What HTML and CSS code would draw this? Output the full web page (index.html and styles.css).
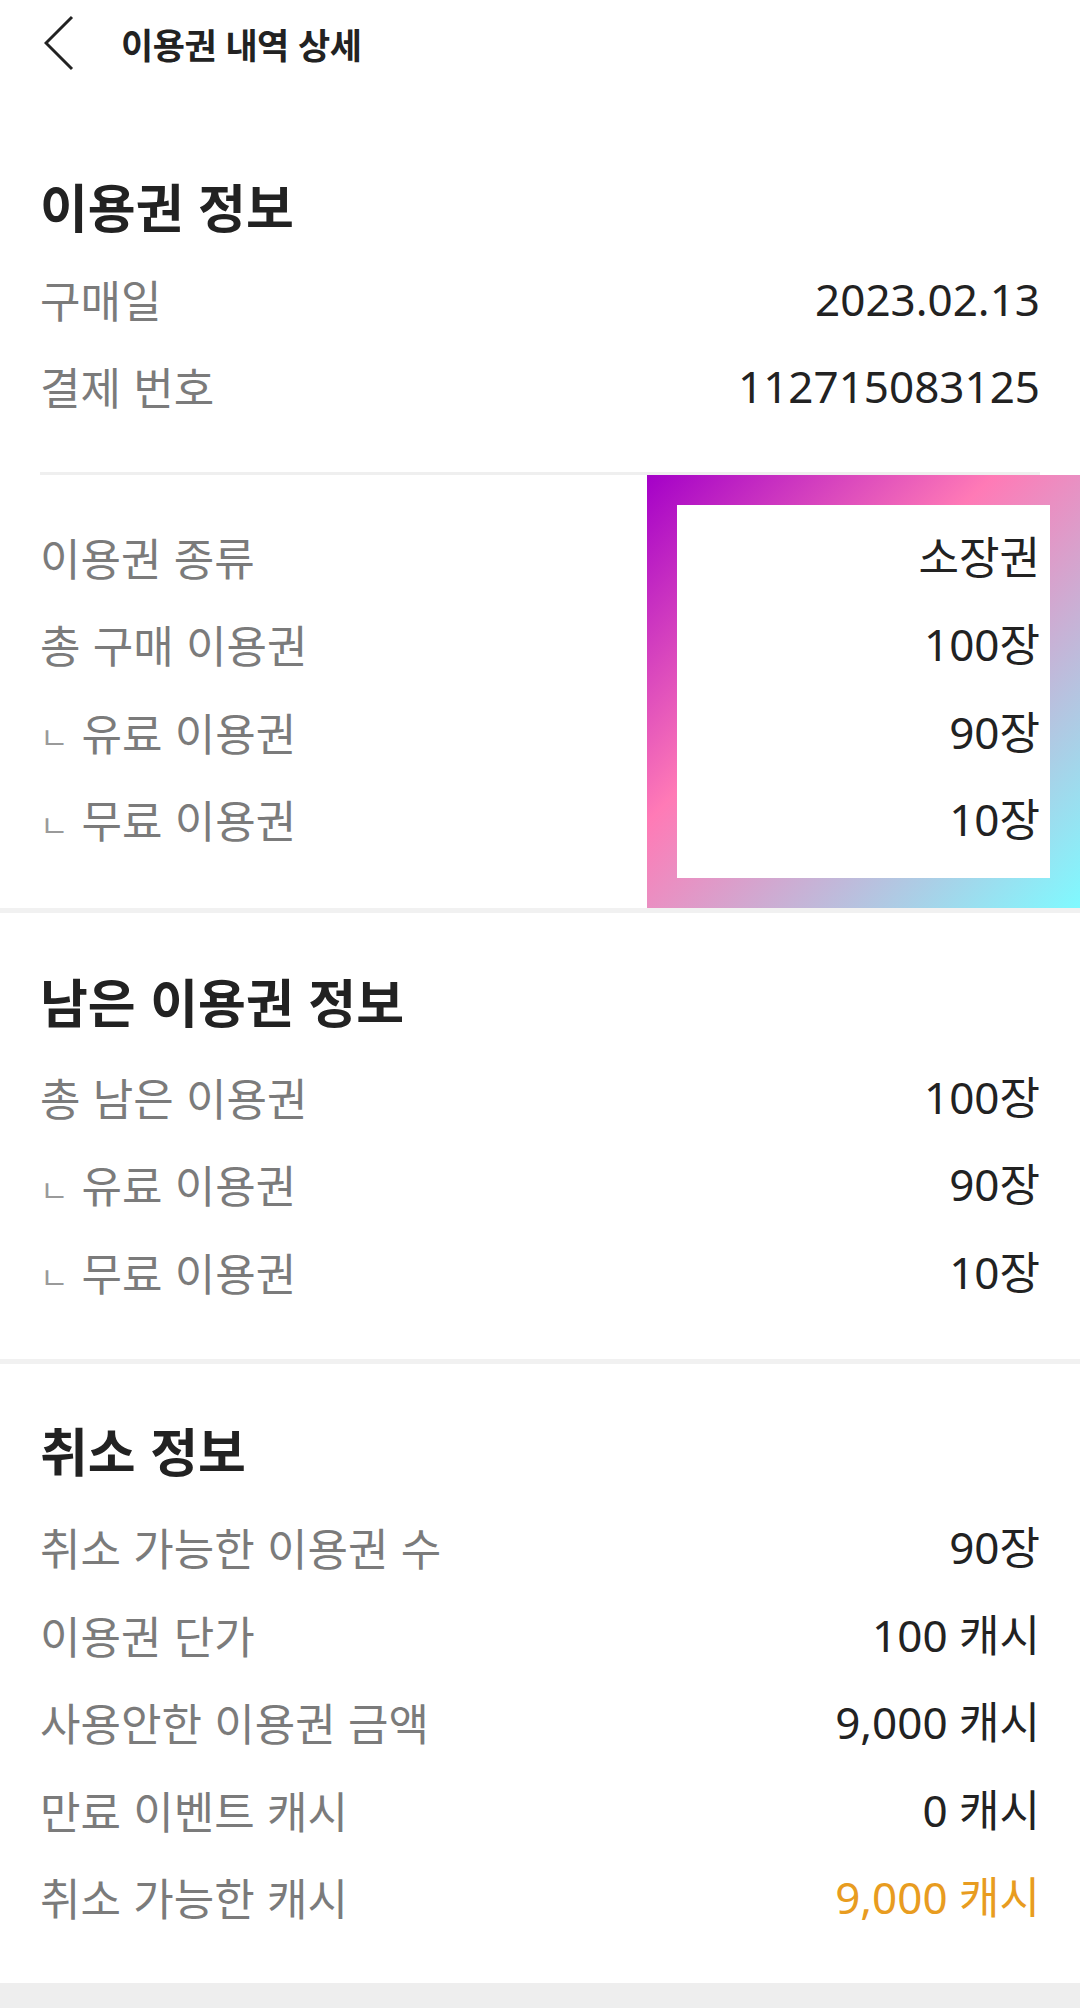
FILE: index.html
```html
<!DOCTYPE html>
<html lang="ko">
<head>
<meta charset="utf-8">
<title>이용권 내역 상세</title>
<link rel="stylesheet" href="styles.css">
</head>
<body>
<header class="header">
  <svg class="back" width="30" height="56" viewBox="0 0 30 56" aria-hidden="true">
    <polyline points="28,2 2,28 28,54" fill="none" stroke="#222" stroke-width="3"/>
  </svg>
  <h1 class="header-title">이용권 내역 상세</h1>
</header>

<section class="section section-first">
  <h2 class="section-title">이용권 정보</h2>
  <div class="rows">
    <div class="row"><span class="label">구매일</span><span class="value">2023.02.13</span></div>
    <div class="row"><span class="label">결제 번호</span><span class="value">112715083125</span></div>
  </div>
  <div class="divider"></div>
  <div class="group">
    <div class="highlight"></div>
    <div class="row"><span class="label">이용권 종류</span><span class="value">소장권</span></div>
    <div class="row"><span class="label">총 구매 이용권</span><span class="value">100장</span></div>
    <div class="row"><span class="label"><span class="sub">ㄴ</span>유료 이용권</span><span class="value">90장</span></div>
    <div class="row"><span class="label"><span class="sub">ㄴ</span>무료 이용권</span><span class="value">10장</span></div>
  </div>
</section>

<div class="separator"></div>

<section class="section section-mid">
  <h2 class="section-title">남은 이용권 정보</h2>
  <div class="rows">
    <div class="row"><span class="label">총 남은 이용권</span><span class="value">100장</span></div>
    <div class="row"><span class="label"><span class="sub">ㄴ</span>유료 이용권</span><span class="value">90장</span></div>
    <div class="row"><span class="label"><span class="sub">ㄴ</span>무료 이용권</span><span class="value">10장</span></div>
  </div>
</section>

<div class="separator"></div>

<section class="section section-last">
  <h2 class="section-title">취소 정보</h2>
  <div class="rows">
    <div class="row"><span class="label">취소 가능한 이용권 수</span><span class="value">90장</span></div>
    <div class="row"><span class="label">이용권 단가</span><span class="value">100 캐시</span></div>
    <div class="row"><span class="label">사용안한 이용권 금액</span><span class="value">9,000 캐시</span></div>
    <div class="row"><span class="label">만료 이벤트 캐시</span><span class="value">0 캐시</span></div>
    <div class="row"><span class="label">취소 가능한 캐시</span><span class="value value-accent">9,000 캐시</span></div>
  </div>
</section>

<div class="footer-band"></div>
</body>
</html>
```

FILE: styles.css
```css
* { box-sizing: border-box; }

html, body {
  margin: 0;
  padding: 0;
  background: #ffffff;
}

body {
  width: 1080px;
  font-family: "Noto Sans CJK KR", "Noto Sans", sans-serif;
  color: #222222;
}

.header {
  height: 86px;
  display: flex;
  align-items: center;
  padding-left: 44px;
}

.back {
  display: block;
  flex: none;
}

.header-title {
  margin: 0 0 0 47px;
  font-size: 35px;
  font-weight: 700;
  line-height: 1;
  color: #222222;
  letter-spacing: -0.5px;
}

.section {
  padding: 0 40px;
}

.section-first { padding-top: 90px; padding-bottom: 0; }
.section-mid { padding-top: 58px; padding-bottom: 43px; }
.section-last { padding-top: 56px; padding-bottom: 42px; }

.section-title {
  margin: 0;
  font-size: 52px;
  font-weight: 700;
  line-height: 60px;
  color: #222222;
}

.section-first .section-title { margin-bottom: 19px; }
.section-mid .section-title { margin-bottom: 22px; }
.section-last .section-title { margin-bottom: 24px; }

.row {
  position: relative;
  z-index: 1;
  height: 87.5px;
  display: flex;
  align-items: center;
  justify-content: space-between;
  font-size: 44px;
  line-height: 1;
}

.label {
  color: #7b7b7b;
  display: flex;
  align-items: center;
}

.sub {
  font-size: 31px;
  color: #9a9a9a;
  margin: 8px 13px 0 0;
}

.value {
  color: #222222;
  font-family: "Noto Sans", "Noto Sans CJK KR", sans-serif;
}

.value-accent {
  color: #e89c20;
}

.divider {
  height: 3px;
  background: #efefef;
  margin-top: 42px;
}

.group {
  position: relative;
  padding: 38px 0 45px;
}

.highlight {
  position: absolute;
  top: 0;
  bottom: 0;
  right: -40px;
  width: 433px;
  z-index: 0;
  border: 30px solid transparent;
  background:
    linear-gradient(#ffffff, #ffffff) padding-box,
    linear-gradient(135deg, #a400c8 0%, #ff7ab6 40%, #7ffaff 100%) border-box;
}

.separator {
  height: 5px;
  background: #f1f1f1;
}

.footer-band {
  height: 25px;
  background: #eeeeee;
}
```
